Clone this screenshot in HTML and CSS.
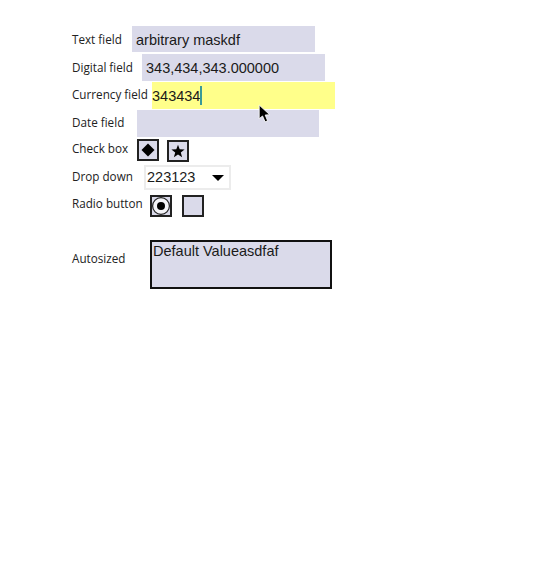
FILE: index.html
```html
<!DOCTYPE html>
<html lang="en">
<head>
    <meta charset="UTF-8">
    <meta name="viewport" content="width=device-width, initial-scale=1.0">
    <title>Form fields</title>
    <link rel="stylesheet" href="styles.css">
</head>
<body>

<div class="form">
    <div class="row row-text">
        <span class="label">Text field</span>
        <div class="field">arbitrary maskdf</div>
    </div>
    <div class="row row-digital">
        <span class="label">Digital field</span>
        <div class="field">343,434,343.000000</div>
    </div>
    <div class="row row-currency">
        <span class="label">Currency field</span>
        <div class="field field-active">343434<span class="caret"></span></div>
    </div>
    <div class="row row-date">
        <span class="label">Date field</span>
        <div class="field field-date"></div>
    </div>
    <div class="row row-check">
        <span class="label">Check box</span>
        <div class="box">
            <svg width="14" height="14" viewBox="0 0 14 14"><path d="M7 0.5L13.5 7L7 13.5L0.5 7Z" fill="#000"/></svg>
        </div>
        <div class="box box-low">
            <svg width="14" height="14" viewBox="0 0 14 14"><path d="M7 0.8L8.7 5.3L13.6 5.5L9.8 8.5L11.1 13.3L7 10.6L2.9 13.3L4.2 8.5L0.4 5.5L5.3 5.3Z" fill="#000"/></svg>
        </div>
    </div>
    <div class="row row-drop">
        <span class="label">Drop down</span>
        <div class="select">
            <span>223123</span>
            <span class="arrow"></span>
        </div>
    </div>
    <div class="row row-radio">
        <span class="label">Radio button</span>
        <div class="box box-radio">
            <svg width="18" height="18" viewBox="0 0 18 18"><circle cx="9" cy="9" r="8.4" fill="#f4f4f8" stroke="#222" stroke-width="1.2"/><circle cx="9" cy="9" r="4" fill="#000"/></svg>
        </div>
        <div class="box"></div>
    </div>
    <div class="row row-auto">
        <span class="label">Autosized</span>
        <div class="textarea">Default Valueasdfaf</div>
    </div>
</div>

<!-- mouse pointer -->
<svg class="pointer" width="15" height="21" viewBox="0 0 14 20">
    <path d="M1 1L1 14L4.2 11.4L6.6 17L9 16L6.7 10.5L11 10.2Z" fill="#000" stroke="#fff" stroke-width="0.8"/>
</svg>

</body>
</html>
```

FILE: styles.css
```css
body {
    font-family: "Liberation Sans", Arial, sans-serif;
    background-color: #fff;
    color: #1a1a1a;
    margin: 0;
    padding: 0;
}

.form {
    padding: 26px 0 0 72px;
}

.row {
    display: flex;
    align-items: flex-start;
}

.label {
    font-family: "Open Sans", sans-serif;
    font-size: 11.7px;
    line-height: 16px;
    color: #222;
    flex-shrink: 0;
}

.field {
    width: 183px;
    height: 27px;
    background-color: #dadaea;
    font-size: 14.5px;
    line-height: 28px;
    padding-left: 4px;
    box-sizing: border-box;
}

.field-date {
    width: 182px;
}

.row-text {
    height: 28px;
}

.row-text .label {
    width: 60px;
    margin-top: 5px;
}

.row-text .field {
    height: 26px;
}

.row-digital {
    height: 28px;
}

.row-digital .label {
    width: 70px;
    margin-top: 5px;
}

.row-currency {
    height: 28px;
}

.row-currency .label {
    width: 80px;
    margin-top: 4px;
}

.row-date {
    height: 29px;
}

.row-date .label {
    width: 65px;
    margin-top: 4px;
}

.field-active {
    background-color: #ffff8a;
    padding-left: 0;
    display: flex;
    align-items: center;
}

.caret {
    display: inline-block;
    width: 2px;
    height: 19px;
    background-color: #3a9a98;
}

.row-check {
    height: 26px;
}

.row-check .label {
    width: 65px;
    margin-top: 1px;
}

.box {
    width: 22px;
    height: 22px;
    box-sizing: border-box;
    border: 2px solid #222;
    background-color: #dadaea;
    display: flex;
    align-items: center;
    justify-content: center;
}

.box-low {
    margin: 1px 0 0 8px;
}

.row-drop {
    height: 30px;
}

.row-drop .label {
    width: 72px;
    margin-top: 3px;
}

.select {
    width: 87px;
    height: 25px;
    box-sizing: border-box;
    border: 2px solid #ececec;
    font-size: 14.5px;
    line-height: 25px;
    padding: 0 5px 0 1px;
    display: flex;
    justify-content: space-between;
    align-items: center;
}

.arrow {
    width: 0;
    height: 0;
    border-left: 6px solid transparent;
    border-right: 6px solid transparent;
    border-top: 6px solid #000;
}

.row-radio {
    height: 45px;
}

.row-radio .label {
    width: 78px;
}

.row-radio .box + .box {
    margin-left: 10px;
}

.row-auto .label {
    width: 78px;
    margin-top: 10px;
}

.textarea {
    width: 182px;
    height: 49px;
    box-sizing: border-box;
    border: 2px solid #111;
    background-color: #dadaea;
    font-size: 14.5px;
    line-height: 18px;
    padding: 0 1px;
}

.pointer {
    position: absolute;
    left: 258px;
    top: 104px;
}
```
